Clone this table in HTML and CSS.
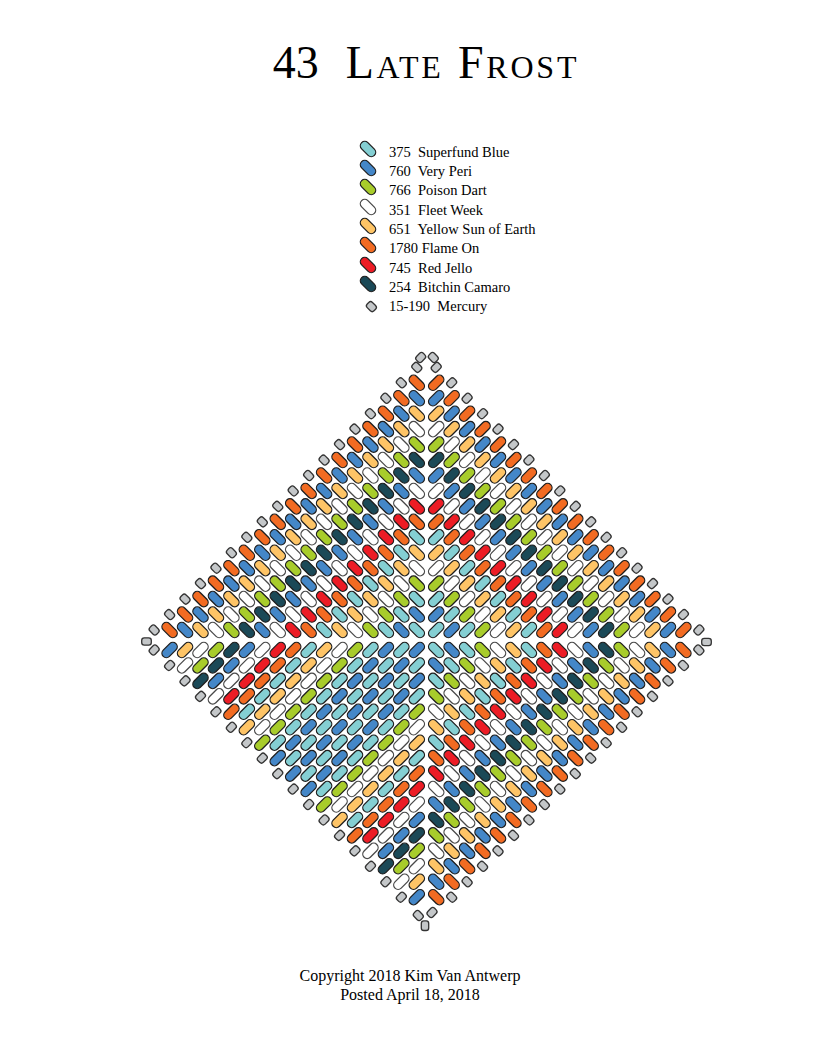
FILE: index.html
```html
<!DOCTYPE html>
<html lang="en">
<head>
<meta charset="utf-8">
<title>43 Late Frost</title>
<link rel="stylesheet" href="styles.css">
</head>
<body>
<div class="page">
  <h1 class="title"><span class="num">43</span><span class="name">Late Frost</span></h1>

  <ul class="legend">
    <li class="item"><svg class="swatch" viewBox="0 0 22 22"><rect class="bead bC" x="2" y="6.6" width="18" height="8.8" rx="4.4" transform="rotate(45 11 11)"/></svg><span class="label">375  Superfund Blue</span></li>
    <li class="item"><svg class="swatch" viewBox="0 0 22 22"><rect class="bead bB" x="2" y="6.6" width="18" height="8.8" rx="4.4" transform="rotate(45 11 11)"/></svg><span class="label">760  Very Peri</span></li>
    <li class="item"><svg class="swatch" viewBox="0 0 22 22"><rect class="bead bG" x="2" y="6.6" width="18" height="8.8" rx="4.4" transform="rotate(45 11 11)"/></svg><span class="label">766  Poison Dart</span></li>
    <li class="item"><svg class="swatch" viewBox="0 0 22 22"><rect class="bead bW" x="2" y="6.6" width="18" height="8.8" rx="4.4" transform="rotate(45 11 11)"/></svg><span class="label">351  Fleet Week</span></li>
    <li class="item"><svg class="swatch" viewBox="0 0 22 22"><rect class="bead bY" x="2" y="6.6" width="18" height="8.8" rx="4.4" transform="rotate(45 11 11)"/></svg><span class="label">651  Yellow Sun of Earth</span></li>
    <li class="item"><svg class="swatch" viewBox="0 0 22 22"><rect class="bead bO" x="2" y="6.6" width="18" height="8.8" rx="4.4" transform="rotate(45 11 11)"/></svg><span class="label">1780 Flame On</span></li>
    <li class="item"><svg class="swatch" viewBox="0 0 22 22"><rect class="bead bR" x="2" y="6.6" width="18" height="8.8" rx="4.4" transform="rotate(45 11 11)"/></svg><span class="label">745  Red Jello</span></li>
    <li class="item"><svg class="swatch" viewBox="0 0 22 22"><rect class="bead bT" x="2" y="6.6" width="18" height="8.8" rx="4.4" transform="rotate(45 11 11)"/></svg><span class="label">254  Bitchin Camaro</span></li>
    <li class="item"><svg class="swatch" viewBox="0 0 22 22"><rect class="bead bS" x="9.6" y="10.9" width="9.6" height="7.4" rx="2.6" transform="rotate(45 14.4 14.6)"/></svg><span class="label">15-190  Mercury</span></li>
  </ul>

  <div class="diamond" id="diamond"></div>

  <footer class="credits">
    <p class="line">Copyright 2018 Kim Van Antwerp</p>
    <p class="line">Posted April 18, 2018</p>
  </footer>
</div>
<script src="script.js"></script>
</body>
</html>
```

FILE: styles.css
```css
* { box-sizing: border-box; }

body {
  margin: 0;
  background: #ffffff;
  color: #000000;
  font-family: "Liberation Serif", "Times New Roman", serif;
}

.page {
  width: 816px;
  height: 1056px;
  overflow: hidden;
}

.title {
  margin: 0;
  padding: 40px 0 0 36px;
  display: flex;
  justify-content: center;
  gap: 27px;
  font-weight: normal;
  font-size: 46px;
  line-height: 46px;
}

.name {
  font-variant: small-caps;
  letter-spacing: 2.8px;
}

.legend {
  list-style: none;
  margin: 56.8px 0 0 357px;
  padding: 0;
}

.item {
  display: flex;
  align-items: flex-start;
  gap: 10px;
  height: 19.3px;
}

.swatch {
  flex: none;
  width: 22px;
  height: 22px;
  margin-top: -5px;
  overflow: visible;
}

.label {
  font-family: "Liberation Serif", "Times New Roman", serif;
  font-size: 14.5px;
  line-height: 19.3px;
  white-space: pre;
}

.diamond {
  margin: 23.5px 0 0 116px;
  width: 620px;
  height: 600px;
}

.diamond svg {
  display: block;
}

.credits {
  margin-top: 27.35px;
  padding-left: 4px;
  text-align: center;
  font-size: 16px;
  line-height: 18.5px;
}

.line {
  margin: 0;
}

.bead { stroke: #1e1e1e; stroke-width: 1.3; }
.bC { fill: #84cfd3; }
.bB { fill: #4487c8; }
.bG { fill: #a8cc2b; }
.bW { fill: #ffffff; stroke: #4a4a4a; }
.bY { fill: #fec466; }
.bO { fill: #f26b22; }
.bR { fill: #ec1c25; }
.bT { fill: #1b4957; }
.bS { fill: #c4c7c9; stroke: #333333; }
```

FILE: script.js
```js
(function () {
  var NS = 'http://www.w3.org/2000/svg';
  var host = document.getElementById('diamond');
  var svg = document.createElementNS(NS, 'svg');
  svg.setAttribute('width', '620');
  svg.setAttribute('height', '600');
  svg.setAttribute('viewBox', '116 340 620 600');

  var F = 'OBYWGTBWROCYWGCBCBCBCGWYCORWBTGWYB';
  var P = 15.45, XL = 416.8, XR = 436.2, YU = 630, YD = 650;

  function rect(x, y, a, L, W, rx, cls) {
    var r = document.createElementNS(NS, 'rect');
    r.setAttribute('x', (x - L / 2).toFixed(2));
    r.setAttribute('y', (y - W / 2).toFixed(2));
    r.setAttribute('width', L);
    r.setAttribute('height', W);
    r.setAttribute('rx', rx);
    r.setAttribute('transform', 'rotate(' + a + ' ' + x.toFixed(2) + ' ' + y.toFixed(2) + ')');
    r.setAttribute('class', 'bead ' + cls);
    svg.appendChild(r);
  }
  function bead(x, y, a, col) { rect(x, y, a, 18, 8.8, 4.4, 'b' + col); }
  function gray(x, y, a) { rect(x, y, a, 9.6, 7.4, 2.6, 'bS'); }

  var k, c, j, y;
  for (k = -1; k <= 16; k++) {
    y = YU - P * (16 - k);
    for (c = 0; c <= k; c++) {
      bead(XL - P * c, y, 45, F[k - c]);
      bead(XR + P * c, y, -45, F[k - c]);
    }
    gray(XL - P * (k + 1), y, 45);
    gray(XR + P * (k + 1), y, -45);
  }
  for (j = 0; j <= 16; j++) {
    y = YD + P * j;
    for (c = 0; c <= 16 - j; c++) {
      bead(XL - P * c, y, -45, F[17 + j - c]);
      bead(XR + P * c, y, 45, F[16 - j - c]);
    }
    gray(XL - P * (17 - j), y, -45);
    gray(XR + P * (17 - j), y, 45);
  }
  gray(420.7, 357.5, -45);
  gray(433.3, 357.5, 45);
  gray(146.5, 641.5, 0);
  gray(706.5, 642, 0);
  gray(418.3, 915.5, 45);
  gray(432, 912.5, -45);
  gray(425, 925.7, 90);

  host.appendChild(svg);
})();
```
